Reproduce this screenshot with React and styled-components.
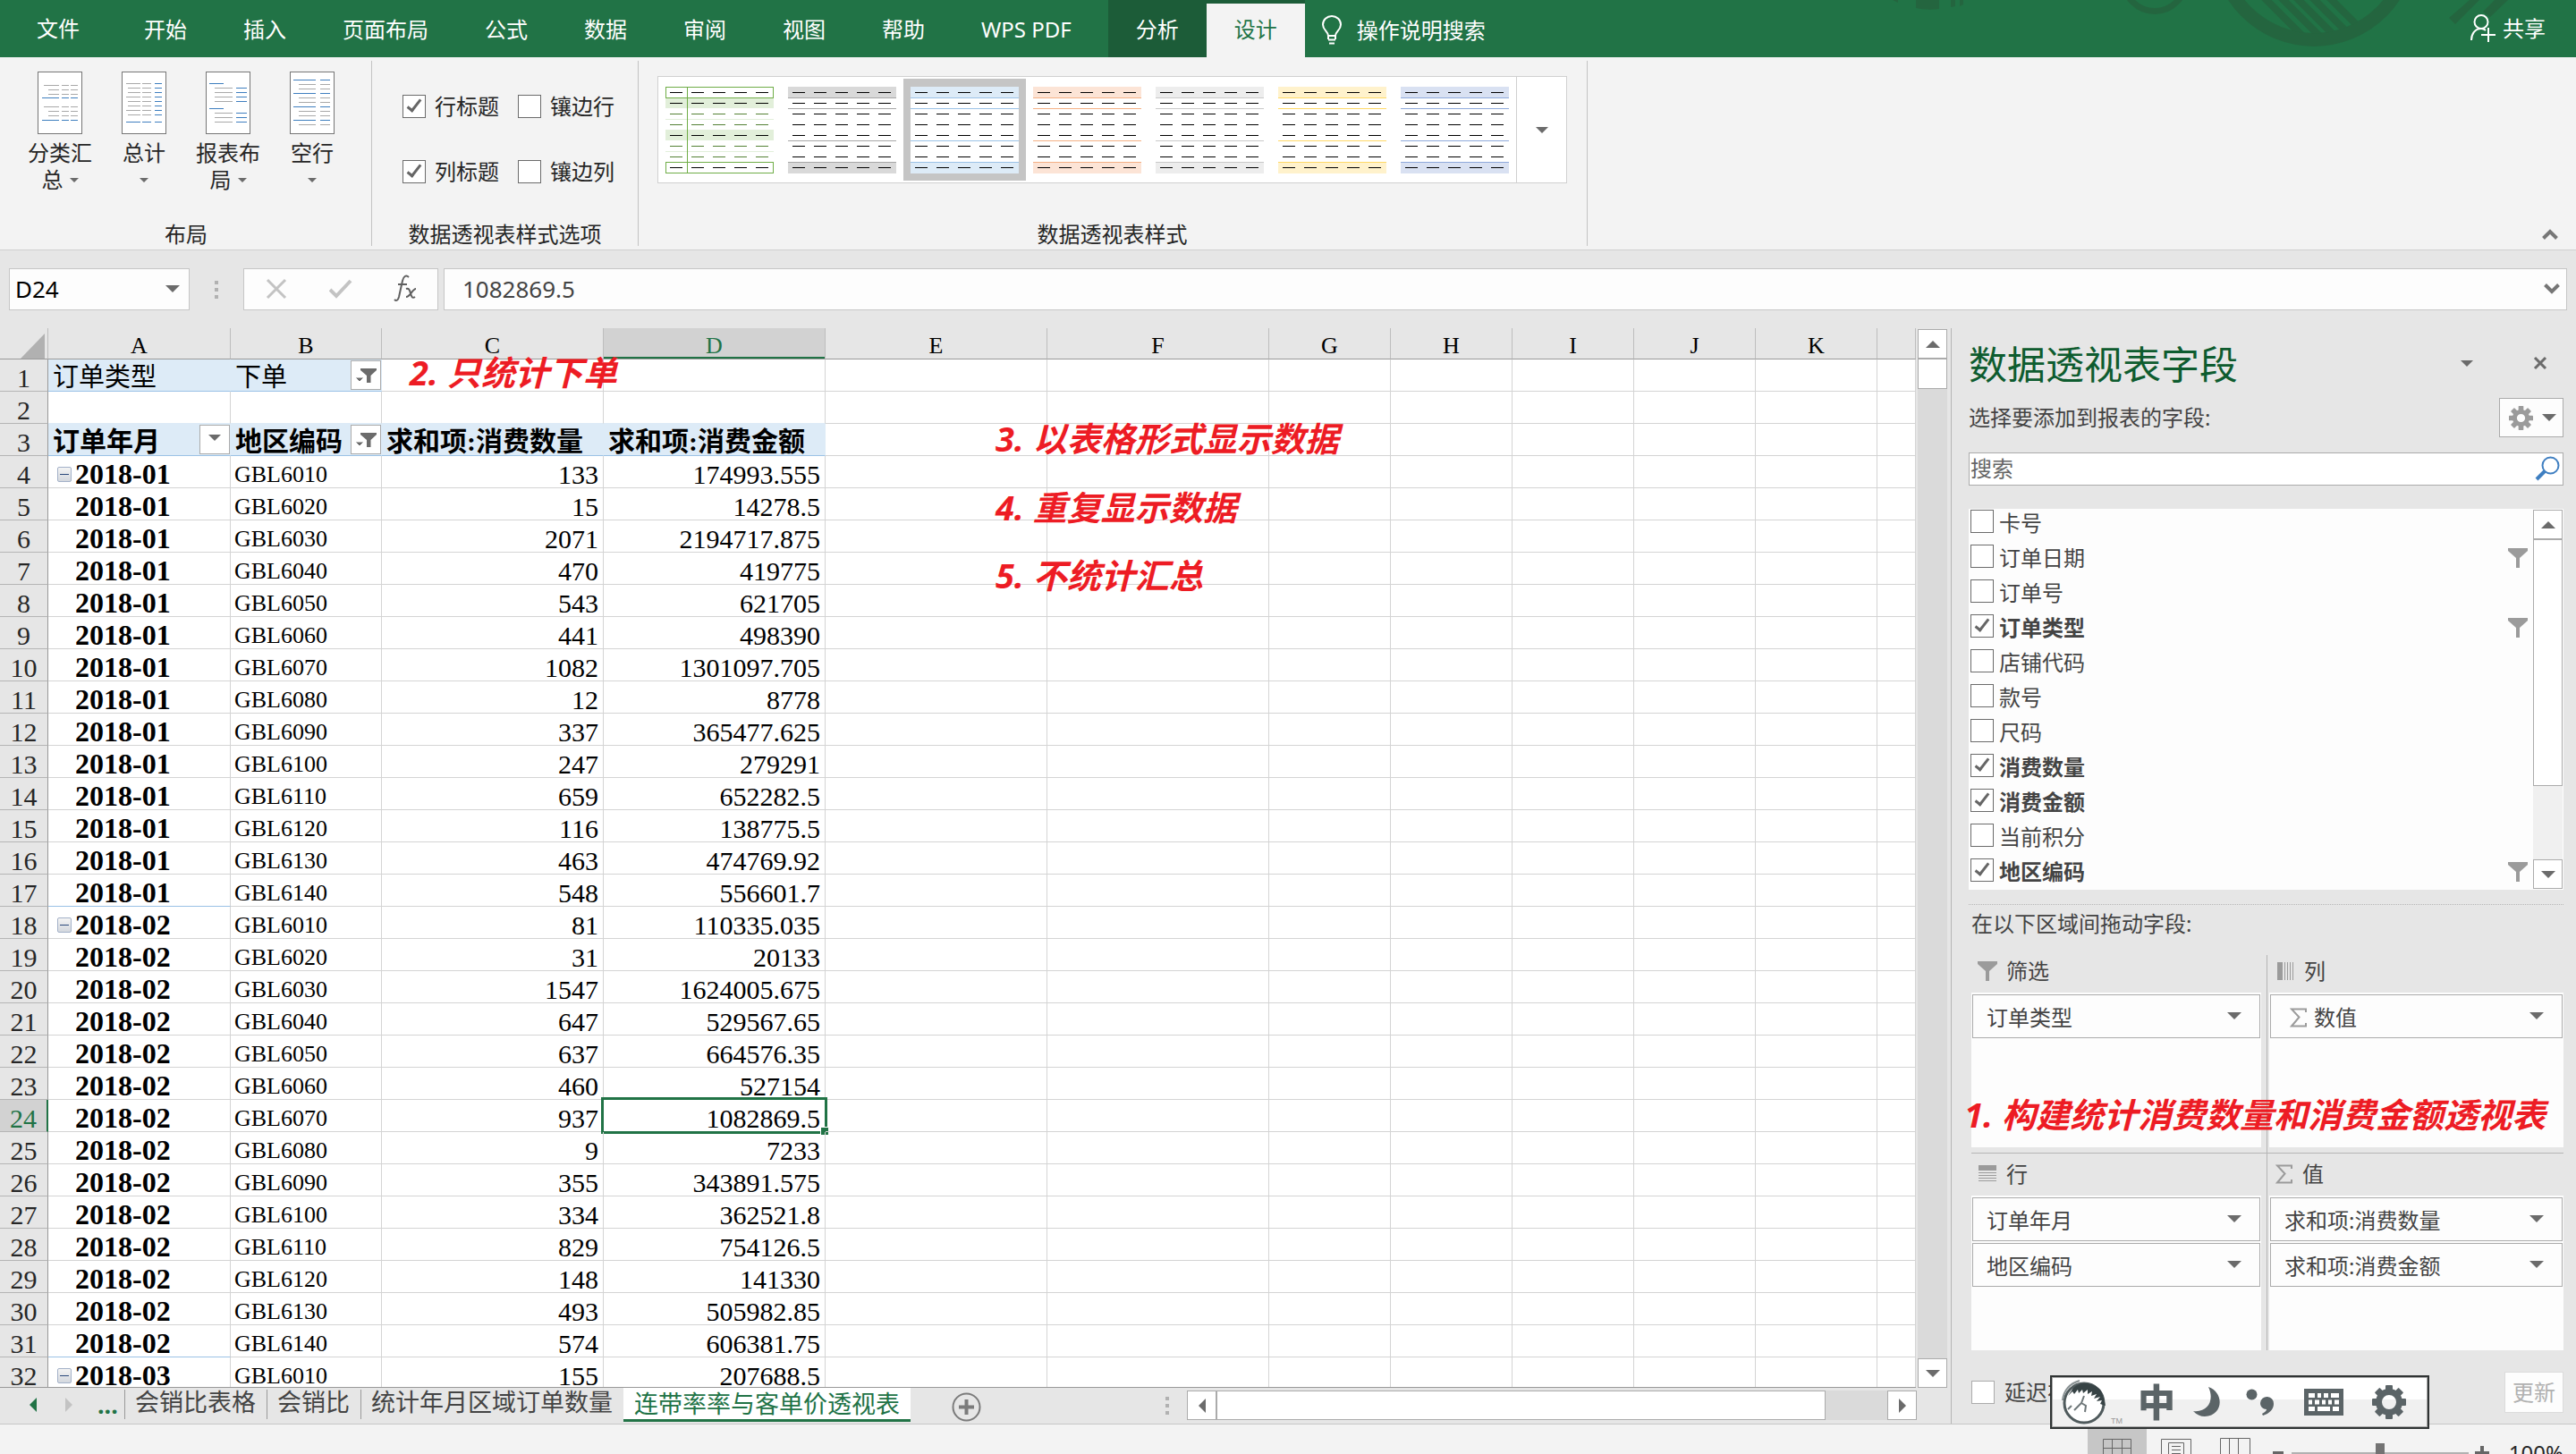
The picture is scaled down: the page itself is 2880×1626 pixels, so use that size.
import React from "react";
import styled, { createGlobalStyle, css } from "styled-components";

const UI = '"Noto Sans", "Noto Sans CJK SC", sans-serif';
const SERIF = '"Liberation Serif", "Noto Sans CJK SC", serif';
const GREEN = "#217346";
const LINE = "#ababab";
const GRID = "#d4d4d4";
const PIVOT = "#ddebf7";
const PIVOT_LINE = "#9bc2e6";

const GlobalStyle = createGlobalStyle`
  *, *::before, *::after { box-sizing: border-box; }
  html, body, #root { height: 100%; }
  body { margin: 0; overflow: hidden; background: #e6e6e6; font: 24px/32px ${UI}; color: #262626; }
  button, input { font: inherit; color: inherit; margin: 0; padding: 0; border: 0; border-radius: 0; background: none; }
  button { white-space: nowrap; }
  svg { display: block; flex: none; }
`;

const Page = styled.div`
  display: flex;
  flex-direction: column;
  height: 100vh;
`;

/* ---------- ribbon tabs ---------- */

const TabBar = styled.header`
  position: relative;
  display: flex;
  flex: none;
  height: 64px;
  background: ${GREEN};
  color: #fff;
`;

const Decoration = styled.svg`
  position: absolute;
  top: 0;
  right: 40px;
`;

const Tab = styled.button`
  height: 64px;
  padding: 1px 32px 0 31px;
`;

const FileTab = styled(Tab)`
  padding: 2px 41px;
`;

const ContextTabs = styled.div`
  display: flex;
  margin-left: 9px;
  padding-top: 4px;
  background: #1c5c38;
`;

const ContextTab = styled(Tab)`
  height: 60px;
  padding: 0 31px 3px;
  background: ${(p) => (p.$active ? "#f3f3f3" : "transparent")};
  color: ${(p) => (p.$active ? GREEN : "#fff")};
`;

const TellMe = styled.button`
  display: flex;
  align-items: center;
  gap: 16px;
  padding: 4px 0 0 18px;
`;

const Share = styled.button`
  position: relative;
  display: flex;
  align-items: center;
  gap: 8px;
  margin-left: auto;
  padding-right: 34px;
`;

/* ---------- ribbon ---------- */

const Ribbon = styled.section`
  display: flex;
  flex: none;
  height: 216px;
  padding: 4px 0;
  background: #f3f3f3;
  border-bottom: 1px solid #d0d0d0;
`;

const Group = styled.div`
  display: flex;
  flex-direction: column;
  justify-content: space-between;
  align-items: center;
  padding: ${(p) => p.$pad};
  border-right: 1px solid #c3c3c3;
`;

const GroupTitle = styled.div`
  line-height: 26px;
`;

const LayoutButtons = styled.div`
  display: flex;
`;

const LayoutButton = styled.button`
  display: flex;
  flex-direction: column;
  align-items: center;
  width: 94px;
  line-height: 30px;
`;

const LayoutLabel = styled.span`
  margin-top: 6px;
`;

const LabelLine = styled.span`
  display: flex;
  align-items: center;
  justify-content: center;
  gap: 7px;
  height: 30px;
`;

const Caret = styled.span`
  display: block;
  flex: none;
  width: 0;
  height: 0;
  border: ${(p) => p.$size || 5}px solid transparent;
  border-bottom-width: 0;
  border-top-color: #6b6b6b;
`;

const OptionGrid = styled.div`
  display: grid;
  grid-template-columns: 129px auto;
  row-gap: 41px;
  padding: 35px 26px 0 34px;
`;

const CheckLabel = styled.label`
  display: flex;
  align-items: center;
  gap: 10px;
  line-height: 32px;
`;

const Check = styled.input.attrs({ type: "checkbox" })`
  appearance: none;
  flex: none;
  width: 26px;
  height: 26px;
  display: grid;
  place-items: center;
  background: #fff;
  border: 1px solid ${(p) => (p.$light ? "#ababab" : "#6b6b6b")};

  &:checked::after {
    content: "";
    width: 8px;
    height: 17px;
    margin-bottom: 5px;
    border: solid #666;
    border-width: 0 3px 3px 0;
    transform: rotate(38deg);
  }
`;

const Gallery = styled.div`
  display: flex;
  margin-top: 17px;
  height: 120px;
  background: #fff;
  border: 1px solid #d0d0d0;
`;

const StyleButton = styled.button`
  display: grid;
  place-items: center;
  width: 137px;
  height: 114px;
  margin-top: 2px;
  background: ${(p) => (p.$selected ? "#c5c5c5" : "transparent")};
`;

const GalleryMore = styled.button`
  display: grid;
  place-items: center;
  width: 56px;
  border-left: 1px solid #d0d0d0;
`;

const Collapse = styled.button`
  align-self: flex-end;
  margin: 0 20px 7px auto;
`;

/* ---------- formula bar ---------- */

const FormulaBar = styled.section`
  display: flex;
  flex: none;
  height: 87px;
  padding: 20px 10px;
`;

const Box = styled.div`
  display: flex;
  align-items: center;
  padding-bottom: 2px;
  background: #fdfdfd;
  border: 1px solid #c6c6c6;
`;

const NameBox = styled(Box)`
  width: 202px;
  padding: 0 10px 2px 6px;
  font-size: 26px;
  color: #000;

  input { flex: 1; min-width: 0; }
`;

const FormulaTools = styled(Box)`
  width: 218px;
  justify-content: space-between;
  padding: 0 23px 2px 24px;
`;

const FormulaInput = styled(Box)`
  flex: 1;
  margin-left: 6px;
  padding: 0 7px 2px 20px;
  font-size: 26px;
  color: #444;

  input { flex: 1; min-width: 0; }
`;

const Dots = styled.span`
  flex: none;
  width: 4px;
  height: 20px;
  align-self: center;
  margin: ${(p) => p.$margin};
  background: repeating-linear-gradient(#b1b1b1 0 4px, transparent 4px 8px);
`;

/* ---------- workspace ---------- */

const Workspace = styled.main`
  position: relative;
  display: flex;
  flex: 1;
  min-height: 0;
`;

const Book = styled.div`
  display: flex;
  flex-direction: column;
  flex: 1;
  min-width: 0;
`;

const SheetRow = styled.div`
  display: flex;
  flex: 1;
  min-height: 0;
`;

const SheetView = styled.div`
  position: relative;
  flex: 1;
  min-width: 0;
  overflow: hidden;
  background: #fff;
  border-bottom: 1px solid #999;
`;

const Table = styled.table`
  width: 100%;
  table-layout: fixed;
  border-collapse: separate;
  border-spacing: 0;
  font: 30px/29px ${SERIF};
  color: #000;
`;

const ColHead = styled.th`
  height: 35px;
  padding: 6px 0 0;
  font-size: 26px;
  font-weight: 400;
  line-height: 28px;
  background: ${(p) => (p.$selected ? "#d2d2d2" : "#e6e6e6")};
  color: ${(p) => (p.$selected ? GREEN : "#000")};
  border-right: 1px solid #bdbdbd;
  border-bottom: 1px solid #999;
  box-shadow: ${(p) => (p.$selected ? `inset 0 -2px ${GREEN}` : "none")};
`;

const RowHead = styled.th`
  height: 36px;
  padding: 6px 0 0;
  font-weight: 400;
  background: ${(p) => (p.$selected ? "#d2d2d2" : "#e6e6e6")};
  color: ${(p) => (p.$selected ? GREEN : "#262626")};
  border-right: ${(p) => (p.$selected ? `2px solid ${GREEN}` : "1px solid #999")};
  border-bottom: 1px solid #b5b5b5;
`;

const Cell = styled.td`
  position: relative;
  height: 36px;
  padding: ${(p) => (p.$tools ? "0 0 0 5px" : "6px 5px 0 4px")};
  text-align: ${(p) => (p.$num ? "right" : "left")};
  white-space: nowrap;
  font-size: ${(p) => (p.$code ? 26 : 30)}px;
  border-right: 1px solid ${(p) => (p.$fill ? PIVOT : GRID)};
  border-bottom: 1px solid ${(p) => p.$bottom || GRID};
  background: ${(p) => (p.$fill ? PIVOT : "transparent")};
  font-weight: ${(p) => (p.$bold ? 700 : 400)};
`;

const SelectionFrame = styled.span`
  position: absolute;
  inset: -3px;
  border: 3px solid ${GREEN};

  &::after {
    content: "";
    position: absolute;
    right: -4px;
    bottom: -4px;
    width: 8px;
    height: 8px;
    background: ${GREEN};
    outline: 1px solid #fff;
  }
`;

const HeadCell = styled.div`
  display: flex;
  align-items: center;
  justify-content: space-between;
  height: 35px;
  font-size: ${(p) => (p.$bold ? 30 : 29)}px;
  line-height: 30px;

  span:first-child { padding-top: 5px; }
`;

const FilterButton = styled.button`
  display: grid;
  place-items: center;
  width: 34px;
  height: 33px;
  background: #fff;
  border: 1px solid ${LINE};
`;

const DateCell = styled.div`
  display: flex;
  align-items: center;
  gap: 4px;
  padding-left: ${(p) => (p.$toggle ? 6 : 26)}px;
  font-size: 32px;
`;

const Toggle = styled.button`
  width: 16px;
  height: 17px;
  display: grid;
  place-items: center;
  border: 1px solid #a3b1c8;
  border-radius: 2px;
  background: linear-gradient(#f4f4f4, #d4d8de);

  &::after { content: ""; width: 10px; height: 1px; background: #2c4a7c; }
`;

/* ---------- scroll bars ---------- */

const Scroll = styled.div`
  display: flex;
  flex: none;
  flex-direction: ${(p) => (p.$row ? "row" : "column")};
  ${(p) => (p.$row ? "width: 816px; height: 33px;" : "width: 33px;")}
  margin: ${(p) => p.$margin || 0};
  background: ${(p) => p.$track || "#dadada"};
`;

const ScrollButton = styled.button`
  display: grid;
  place-items: center;
  flex: none;
  width: 33px;
  height: 33px;
  background: #fff;
  border: 1px solid ${LINE};
`;

const Thumb = styled.div`
  flex: none;
  ${(p) => (p.$row ? `width: ${p.$length};` : `height: ${p.$length};`)}
  background: #fff;
  border: 1px solid ${LINE};
`;

const Space = styled.div`
  flex: 1;
`;

const Arrow = styled.svg.attrs({ width: 16, height: 16, viewBox: "0 0 16 16" })`
  fill: ${(p) => p.$color || "#6b6b6b"};
  transform: rotate(${(p) => p.$turn || 0}deg);
`;

/* ---------- sheet tabs ---------- */

const SheetTabs = styled.nav`
  display: flex;
  flex: none;
  height: 40px;
  font-size: 27px;
  color: #444;
`;

const NavButtons = styled.div`
  display: flex;
  align-items: center;
  gap: 24px;
  width: 139px;
  padding: 0 0 3px 29px;

  b { color: ${GREEN}; line-height: 28px; }
`;

const SheetTab = styled.button`
  height: 38px;
  padding: 0 12px;
  line-height: 34px;
  ${(p) =>
    p.$active
      ? css`
          background: #fff;
          color: ${GREEN};
          border-bottom: 3px solid ${GREEN};
        `
      : css`
          height: 33px;
          margin-top: 2px;
          line-height: 28px;
          border-left: 1px solid #999;
          padding: 0 12px 5px 11px;
        `}
`;

const AddSheet = styled.button`
  align-self: flex-start;
  margin: 5px 0 0 46px;
`;

/* ---------- field pane ---------- */

const Pane = styled.aside`
  display: flex;
  flex-direction: column;
  flex: none;
  width: 699px;
  padding: 16px 14px 0 19px;
  border-left: 1px solid #b5b5b5;
  color: #444;
`;

const PaneHead = styled.div`
  display: flex;
  align-items: center;
  height: 50px;

  h2 { flex: 1; margin: 0; font-size: 43px; font-weight: 400; line-height: 50px; color: #0e5c2f; }
`;

const PaneTools = styled.div`
  display: flex;
  align-items: center;
  gap: 67px;
  padding: 0 18px 4px 0;
`;

const Between = styled.div`
  display: flex;
  align-items: center;
  justify-content: space-between;
  margin-top: ${(p) => p.$top}px;
`;

const GearButton = styled.button`
  display: flex;
  align-items: center;
  justify-content: space-between;
  width: 72px;
  height: 44px;
  padding: 0 7px 0 10px;
  background: #fdfdfd;
  border: 1px solid ${LINE};
`;

const Search = styled.label`
  display: flex;
  align-items: center;
  justify-content: space-between;
  height: 37px;
  margin-top: 17px;
  padding: 0 3px 2px 1px;
  background: #fff;
  border: 1px solid ${LINE};

  input { flex: 1; }
  input::placeholder { color: #666; opacity: 1; }
`;

const FieldBox = styled.div`
  display: flex;
  height: 426px;
  margin-top: 26px;
  padding: 1px 1px 1px 2px;
  background: #fdfdfd;
`;

const FieldList = styled.div`
  flex: 1;
  overflow: hidden;
`;

const Field = styled.div`
  display: flex;
  align-items: flex-start;
  height: 39px;
  padding-right: 6px;

  label { display: flex; flex: 1; gap: 6px; line-height: 30px; font-weight: ${(p) => (p.$bold ? 700 : 400)}; }
  svg { margin-top: 4px; }
`;

const DragHint = styled.div`
  margin-top: 16px;
  padding-left: 3px;
  line-height: 42px;
  border-top: 1px dotted #b5b5b5;
`;

const Areas = styled.div`
  display: grid;
  grid-template-columns: 1fr 1fr;
  margin: 14px 0 0 3px;
`;

const Area = styled.section`
  padding: ${(p) => (p.$left ? "0 6px" : "0 0")} ${(p) => (p.$top ? "6px" : "0")} ${(p) => (p.$left ? "0" : "2px")};
  border-right: ${(p) => (p.$left ? "1px solid #b5b5b5" : "0")};
  border-top: ${(p) => (p.$top ? "0" : "1px solid #b5b5b5")};
`;

const AreaTitle = styled.h3`
  display: flex;
  align-items: center;
  gap: 10px;
  height: ${(p) => (p.$top ? 42 : 47)}px;
  margin: 0;
  padding: 0 0 ${(p) => (p.$top ? 6 : 2)}px 7px;
  font-size: 24px;
  font-weight: 400;
`;

const DropBox = styled.div`
  display: flex;
  flex-direction: column;
  gap: 2px;
  height: 173px;
  padding: 2px 1px;
  background: #fdfdfd;
`;

const Chip = styled.button`
  display: flex;
  align-items: center;
  justify-content: space-between;
  height: 49px;
  padding: 2px 20px 0 15px;
  border: 1px solid ${LINE};

  span:first-child { display: flex; align-items: center; gap: 7px; }
  svg { margin-left: 6px; }
  ${Caret} { margin-bottom: 3px; }
`;

const Defer = styled.label`
  display: flex;
  align-items: center;
  gap: 11px;
  padding-left: 3px;
`;

const Update = styled.button`
  width: 66px;
  height: 46px;
  background: #fdfdfd;
  border: 1px solid #dcdcdc;
  color: #b1b1b1;
`;

/* ---------- status bar ---------- */

const Status = styled.footer`
  flex: none;
  height: 34px;
  overflow: hidden;
  background: #f3f3f3;
  border-top: 1px solid #c6c6c6;
`;

const StatusInner = styled.div`
  display: flex;
  align-items: center;
  justify-content: flex-end;
  height: 63px;
  padding-right: 14px;
`;

const ViewButton = styled.button`
  display: grid;
  place-items: center;
  width: 66px;
  height: 63px;
  background: ${(p) => (p.$active ? "#c6c6c6" : "transparent")};
`;

const ZoomOut = styled.button`
  width: 12px;
  height: 4px;
  margin-left: 9px;
  background: #666;
`;

const ZoomSlider = styled.input.attrs({ type: "range" })`
  appearance: none;
  width: 198px;
  height: 22px;
  margin: 0 7px 0 9px;
  background: linear-gradient(#b1b1b1, #b1b1b1) center / 100% 2px no-repeat;

  &::-webkit-slider-thumb {
    appearance: none;
    width: 10px;
    height: 22px;
    background: #737373;
  }
`;

const Zoom = styled.button`
  margin-left: 22px;
`;

/* ---------- floating parts ---------- */

const Note = styled.p`
  position: absolute;
  left: ${(p) => p.$x}px;
  top: ${(p) => p.$y}px;
  margin: 0;
  font: italic 700 38px/44px ${UI};
  color: #ed1c24;
  white-space: nowrap;
`;

const PaneNote = styled(Note)`
  right: 34px;
  left: auto;
  top: 857px;
`;

const Ime = styled.div`
  position: fixed;
  z-index: 2;
  right: 164px;
  bottom: 28px;
  display: grid;
  grid-template-columns: 86px 62px 59px 65px 76px 38px;
  align-items: center;
  width: 424px;
  height: 60px;
  padding-left: 10px;
  border: 2px solid #2f3333;
  background: linear-gradient(#fff 45%, #f0f0f0 45%);
  box-shadow: inset 0 0 0 1px #a8a8a8;
  color: #5b6467;
`;

const ImeMode = styled.button`
  justify-self: start;
  font-weight: 900;
  font-size: 42px;
  line-height: 44px;
`;

/* ---------- drawings ---------- */

const Lines = ({ items, color }) =>
  items.map(([x1, x2, y], i) => <path key={i} d={`M${x1} ${y + 0.5}H${x2}`} stroke={color} />);

const cols = (ys, spans) => ys.flatMap((y) => spans.map(([a, b]) => [a, b, y]));

const LAYOUT_ICONS = {
  subtotal: {
    gray: [
      ...cols([15, 39], [[7, 24], [27, 35], [37, 45]]),
      ...cols([20, 25, 44, 49], [[12, 24], [27, 35], [37, 45]]),
    ],
    blue: cols([29, 54], [[5, 24], [27, 35], [37, 45]]),
  },
  total: {
    gray: [
      ...cols([13, 28, 43], [[5, 21], [23, 33]]),
      ...cols([18, 23, 33, 38, 48], [[7, 21], [23, 33]]),
    ],
    blue: [...cols([13, 18, 23, 28, 33, 38, 43, 48], [[37, 45]]), ...cols([56], [[5, 21], [23, 33], [37, 45]])],
  },
  report: {
    gray: cols([18, 23, 28, 33, 46, 51, 56], [[10, 30]]),
    blue: [...cols([13, 41], [[4, 20]]), ...cols([18, 23, 28, 33, 46, 51, 56], [[34, 46]])],
  },
  blank: {
    gray: cols([14, 19, 29, 34, 44, 49, 59], [[10, 29], [34, 45]]),
    blue: cols([9, 24, 39, 54], [[4, 29], [34, 45]]),
  },
};

const LayoutIcon = ({ kind }) => (
  <svg width="50" height="70" viewBox="0 0 50 70">
    <rect x=".5" y=".5" width="49" height="69" fill="#fff" stroke="#767676" />
    <Lines items={LAYOUT_ICONS[kind].gray} color="#a9a9a9" />
    <Lines items={LAYOUT_ICONS[kind].blue} color="#3f7fbf" />
  </svg>
);

const DASHES = [0, 1, 2, 3, 4, 5, 6, 7];

const Swatch = ({ fill, line, green }) => (
  <svg width="121" height="97" viewBox="0 0 121 97" shapeRendering="crispEdges">
    <rect width="121" height="97" fill="#fff" />
    {green ? (
      <>
        <path d="M0 13h121v11H0zM0 48h121v12H0z" fill="#e2efda" />
        <path d="M0 36.5h121M0 72.5h121" stroke="#e2efda" />
        <path d="M.5.5h120v12H.5zM.5 84.5h120v12H.5zM24.5 0v97" fill="none" stroke="#70ad47" />
      </>
    ) : (
      <>
        <path d="M0 0h121v12H0zM0 85h121v12H0z" fill={fill} />
        <path d="M0 12.5h121M0 24.5h121M0 60.5h121M0 84.5h121" stroke={line} />
      </>
    )}
    {DASHES.map((i) => (
      <path
        key={i}
        d={`M5 ${6.5 + i * 12}h110`}
        stroke={green && [2, 3, 5, 6].includes(i) ? "#548235" : "#000"}
        strokeDasharray="14 10"
      />
    ))}
  </svg>
);

const Funnel = ({ size = 22, color = "#9b9b9b" }) => (
  <svg width={size} height={size} viewBox="0 0 22 22">
    <path d="M0 0h22v3l-9 8v11H9V11L0 3z" fill={color} />
  </svg>
);

const FilterGlyph = () => (
  <svg width="26" height="20" viewBox="0 0 26 20">
    <path d="M7 2h18v2l-6.500 6v8h-4.500v-8L7 4z" fill="#6b6b6b" />
    <path d="M1 12h10l-5 5z" fill="#6b6b6b" stroke="#fff" />
  </svg>
);

const gearTeeth = (n, cx, cy, r1, r2, w) =>
  Array.from({ length: n }, (_, i) => (
    <rect
      key={i}
      x={cx - w / 2}
      y={cy - r2}
      width={w}
      height={r2 - r1 + 3}
      rx="1"
      transform={`rotate(${(360 / n) * i} ${cx} ${cy})`}
    />
  ));

const Gear = ({ size, color, ring }) => (
  <svg width={size} height={size} viewBox="0 0 38 38" fill={color}>
    {gearTeeth(8, 19, 19, 12, 19, 8)}
    <circle cx="19" cy="19" r={ring} fill="none" stroke={color} strokeWidth="7" />
  </svg>
);

const Sigma = () => (
  <svg width="20" height="22" viewBox="0 0 20 22">
    <path d="M18 5V1.500H2L10.500 10.500 2 20.500h16V17" fill="none" stroke="#9b9b9b" strokeWidth="2" />
  </svg>
);

const ColumnsIcon = () => (
  <svg width="22" height="20" viewBox="0 0 22 20">
    <path d="M2 0h6v20H2z" fill="#9b9b9b" />
    <path d="M10.500 0v20M13.500 0v20M16.500 0v20M19.500 0v20" stroke="#9b9b9b" />
  </svg>
);

const RowsIcon = () => (
  <svg width="22" height="20" viewBox="0 0 22 20">
    <path d="M1 0h20v6H1z" fill="#9b9b9b" />
    <path d="M1 8.500h20M1 11.500h20M1 14.500h20M1 17.500h20" stroke="#9b9b9b" />
  </svg>
);

const Chevron = ({ up }) => (
  <svg width="18" height="12" viewBox="0 0 18 12" fill="none" stroke="#767676" strokeWidth="4">
    <path d={up ? "M1.500 10.500 9 3l7.500 7.500" : "M1.500 1.500 9 9l7.500-7.500"} />
  </svg>
);

const TopDecoration = () => (
  <Decoration width="780" height="64" viewBox="2060 0 780 64" aria-hidden="true">
    <g fill="none" stroke="#24653f">
      <circle cx="2587" cy="-62.600" r="107" strokeWidth="15" />
      <circle cx="2409" cy="-22" r="34.500" strokeWidth="7" />
      <clipPath id="ring">
        <circle cx="2587" cy="-62.600" r="100" />
      </clipPath>
      <path
        clipPath="url(#ring)"
        strokeWidth="8"
        d="M2524-10 2584 50M2543-10 2603 50M2560-10 2620 50M2578-10 2638 50M2597-10 2657 50"
      />
    </g>
    <path
      fill="#24653f"
      d="M2142 0h26v10q-13 2-26-1zM2181 0h5v7l-5 1zM2191 0h4v5l-4 2zM2116 0h6v3zM2761 0l-23 20 7 7 27-27zM2789 0l-13 13 8 6 20-19z"
    />
  </Decoration>
);

const EnterMark = () => (
  <svg width="26" height="22" viewBox="0 0 26 22" fill="none" stroke="#c3c3c3" strokeWidth="4">
    <path d="M1 12l7 7L24 2" />
  </svg>
);

/* ---------- data ---------- */

const TABS = ["开始", "插入", "页面布局", "公式", "数据", "审阅", "视图", "帮助", "WPS PDF"];

const LAYOUTS = [
  ["subtotal", "分类汇", "总"],
  ["total", "总计", ""],
  ["report", "报表布", "局"],
  ["blank", "空行", ""],
];

const OPTIONS = [
  ["行标题", true],
  ["镶边行", false],
  ["列标题", true],
  ["镶边列", false],
];

const STYLES = [
  { green: true },
  { fill: "#d9d9d9", line: "#a6a6a6" },
  { fill: "#ddebf7", line: "#9bc2e6", selected: true },
  { fill: "#fce4d6", line: "#f4b084" },
  { fill: "#ededed", line: "#c9c9c9" },
  { fill: "#fff2cc", line: "#ffd966" },
  { fill: "#d9e1f2", line: "#8ea9db" },
];

const COLUMNS = [
  ["A", 204], ["B", 169], ["C", 248], ["D", 248], ["E", 248], ["F", 248],
  ["G", 136], ["H", 136], ["I", 136], ["J", 136], ["K", 136], ["", null],
];

const MONTHS = [
  ["2018-01", [
    ["GBL6010", "133", "174993.555"], ["GBL6020", "15", "14278.5"], ["GBL6030", "2071", "2194717.875"],
    ["GBL6040", "470", "419775"], ["GBL6050", "543", "621705"], ["GBL6060", "441", "498390"],
    ["GBL6070", "1082", "1301097.705"], ["GBL6080", "12", "8778"], ["GBL6090", "337", "365477.625"],
    ["GBL6100", "247", "279291"], ["GBL6110", "659", "652282.5"], ["GBL6120", "116", "138775.5"],
    ["GBL6130", "463", "474769.92"], ["GBL6140", "548", "556601.7"],
  ]],
  ["2018-02", [
    ["GBL6010", "81", "110335.035"], ["GBL6020", "31", "20133"], ["GBL6030", "1547", "1624005.675"],
    ["GBL6040", "647", "529567.65"], ["GBL6050", "637", "664576.35"], ["GBL6060", "460", "527154"],
    ["GBL6070", "937", "1082869.5"], ["GBL6080", "9", "7233"], ["GBL6090", "355", "343891.575"],
    ["GBL6100", "334", "362521.8"], ["GBL6110", "829", "754126.5"], ["GBL6120", "148", "141330"],
    ["GBL6130", "493", "505982.85"], ["GBL6140", "574", "606381.75"],
  ]],
  ["2018-03", [["GBL6010", "155", "207688.5"]]],
];

const ROWS = MONTHS.flatMap(([month, rows]) =>
  rows.map((r, i) => ({ month, first: i === 0, last: i === rows.length - 1 && rows.length > 1, values: r }))
);

const FIELDS = [
  ["卡号"], ["订单日期", false, true], ["订单号"], ["订单类型", true, true], ["店铺代码"], ["款号"],
  ["尺码"], ["消费数量", true], ["消费金额", true], ["当前积分"], ["地区编码", true, true],
];

const AREAS = [
  { title: "筛选", icon: <Funnel />, top: true, left: true, items: ["订单类型"] },
  { title: "列", icon: <ColumnsIcon />, top: true, items: ["数值"], sigma: true },
  { title: "行", icon: <RowsIcon />, left: true, items: ["订单年月", "地区编码"] },
  { title: "值", icon: <Sigma />, items: ["求和项:消费数量", "求和项:消费金额"] },
];

/* ---------- composed parts ---------- */

const blanks = (n) => Array.from({ length: n }, (_, i) => <Cell key={`b${i}`} />);

const UpArrow = () => (
  <Arrow><path d="M8 4l8 8H0z" /></Arrow>
);

const SideArrow = ({ right, color }) => (
  <Arrow $turn={right ? 90 : -90} $color={color}><path d="M8 4l8 8H0z" /></Arrow>
);

const DownArrow = () => (
  <Arrow $turn={180}><path d="M8 4l8 8H0z" /></Arrow>
);

const PivotHead = ({ bold, children, tool }) => (
  <Cell $tools $fill $bold={bold} $bottom={PIVOT_LINE}>
    <HeadCell $bold={bold}>
      <span>{children}</span>
      {tool && <FilterButton aria-label="筛选">{tool}</FilterButton>}
    </HeadCell>
  </Cell>
);

function Sheet() {
  return (
    <Table>
      <colgroup>
        <col style={{ width: 54 }} />
        {COLUMNS.map(([name, width]) => (
          <col key={name} style={width ? { width } : undefined} />
        ))}
      </colgroup>
      <thead>
        <tr>
          <ColHead>
            <svg width="50" height="28" viewBox="0 0 50 28">
              <path d="M50 0v28H23z" fill="#b1b1b1" />
            </svg>
          </ColHead>
          {COLUMNS.map(([name]) => (
            <ColHead key={name} $selected={name === "D"}>{name}</ColHead>
          ))}
        </tr>
      </thead>
      <tbody>
        <tr>
          <RowHead>1</RowHead>
          <PivotHead>订单类型</PivotHead>
          <PivotHead tool={<FilterGlyph />}>下单</PivotHead>
          {blanks(10)}
        </tr>
        <tr>
          <RowHead>2</RowHead>
          {[0, 1, 2, 3].map((i) => <Cell key={i} $bottom={PIVOT} />)}
          {blanks(8)}
        </tr>
        <tr>
          <RowHead>3</RowHead>
          <PivotHead bold tool={<Caret $size={7} />}>订单年月</PivotHead>
          <PivotHead bold tool={<FilterGlyph />}>地区编码</PivotHead>
          <PivotHead bold>求和项:消费数量</PivotHead>
          <PivotHead bold>求和项:消费金额</PivotHead>
          {blanks(8)}
        </tr>
        {ROWS.map(({ month, first, last, values }, i) => {
          const n = i + 4;
          return (
            <tr key={n}>
              <RowHead $selected={n === 24}>{n}</RowHead>
              <Cell $bold $bottom={last ? PIVOT_LINE : undefined}>
                <DateCell $toggle={first}>
                  {first && <Toggle aria-label="折叠" />}
                  {month}
                </DateCell>
              </Cell>
              <Cell $code>{values[0]}</Cell>
              <Cell $num>{values[1]}</Cell>
              <Cell $num>
                {values[2]}
                {n === 24 && <SelectionFrame />}
              </Cell>
              {blanks(8)}
            </tr>
          );
        })}
      </tbody>
    </Table>
  );
}

function FieldPane() {
  return (
    <Pane>
      <PaneHead>
        <h2>数据透视表字段</h2>
        <PaneTools>
          <button aria-label="选项"><Caret $size={7} /></button>
          <button aria-label="关闭">
            <svg width="16" height="16" viewBox="0 0 16 16" stroke="#6b6b6b" strokeWidth="3">
              <path d="M2 2l12 12M14 2 2 14" />
            </svg>
          </button>
        </PaneTools>
      </PaneHead>
      <Between $top={12}>
        <span>选择要添加到报表的字段:</span>
        <GearButton aria-label="工具"><Gear size={27} color="#9b9b9b" ring={10} /><Caret $size={8} /></GearButton>
      </Between>
      <Search>
        <input type="text" placeholder="搜索" aria-label="搜索" />
        <svg width="28" height="28" viewBox="0 0 28 28" fill="none" stroke="#3f7fc1">
          <circle cx="17.500" cy="10.500" r="9" strokeWidth="2" />
          <path d="M11 17 2 26" strokeWidth="4" />
        </svg>
      </Search>
      <FieldBox>
        <FieldList>
          {FIELDS.map(([name, checked, filtered]) => (
            <Field key={name} $bold={checked}>
              <label><Check defaultChecked={!!checked} />{name}</label>
              {filtered && <Funnel />}
            </Field>
          ))}
        </FieldList>
        <Scroll $track="#f0f0f0">
          <ScrollButton aria-label="向上"><UpArrow /></ScrollButton>
          <Thumb $length="65%" />
          <Space />
          <ScrollButton aria-label="向下"><DownArrow /></ScrollButton>
        </Scroll>
      </FieldBox>
      <DragHint>在以下区域间拖动字段:</DragHint>
      <Areas>
        {AREAS.map(({ title, icon, top, left, items, sigma }) => (
          <Area key={title} $top={top} $left={left}>
            <AreaTitle $top={top}>{icon}{title}</AreaTitle>
            <DropBox>
              {items.map((item) => (
                <Chip key={item}>
                  <span>{sigma && <Sigma />}{item}</span>
                  <Caret $size={8} />
                </Chip>
              ))}
            </DropBox>
          </Area>
        ))}
      </Areas>
      <Between $top={24}>
        <Defer><Check $light />延迟布局更新</Defer>
        <Update disabled>更新</Update>
      </Between>
    </Pane>
  );
}

function ImeBar() {
  return (
    <Ime>
      <svg width="70" height="52" viewBox="0 0 70 52">
        <circle cx="26" cy="27" r="22" fill="#fff" stroke="#4f5a5c" strokeWidth="3" />
        <path d="M14 10Q22 3 34 6t14 16l2 8-6-2 2-4-6 1 4-5-7 2 3-5-6 2 1-5-5 3v-5l-5 4-1-4-4 4-1-4-4 5-2-3-5 5z" fill="#374345" />
        <path d="M2 24Q4 7 21 2" fill="none" stroke="#8a9294" strokeWidth="2" />
        <path d="M15 35l8-8 3-8M23 27l5 3-1 7M8 34l4-4" fill="none" stroke="#6e7779" strokeWidth="2" />
        <text x="56" y="50" fontSize="9" fill="#9a9a9a" fontFamily="Liberation Sans, sans-serif">TM</text>
      </svg>
      <ImeMode>中</ImeMode>
      <svg width="30" height="34" viewBox="0 0 30 34">
        <path d="M17 0c18 6 17 32-4 33-5 0-9-2-13-6 17 2 24-13 17-27z" fill="currentColor" />
      </svg>
      <svg width="32" height="30" viewBox="0 0 32 30" fill="currentColor">
        <circle cx="6.500" cy="6.500" r="6" />
        <path d="M16 16a7.500 7.500 0 1 1 15 1c0 6-5 11-12 13l-1-2c4-2 5-4 5-5-4 0-7-3-7-7z" />
      </svg>
      <svg width="44" height="30" viewBox="0 0 44 30">
        <rect width="44" height="30" fill="currentColor" />
        <path
          d="M5 7.500h7M15 7.500h4M22 7.500h5M30 7.500h9M5 15h4M12 15h5M20 15h4M27 15h4M34 15h5M5 22.500h7M15 22.500h14M32 22.500h7"
          stroke="#fff"
          strokeWidth="5"
        />
      </svg>
      <Gear size={38} color="#5b6467" ring={11.5} />
    </Ime>
  );
}

export default function App() {
  return (
    <Page>
      <GlobalStyle />
      <TabBar>
        <TopDecoration />
        <FileTab>文件</FileTab>
        {TABS.map((t) => <Tab key={t}>{t}</Tab>)}
        <ContextTabs>
          <ContextTab>分析</ContextTab>
          <ContextTab $active>设计</ContextTab>
        </ContextTabs>
        <TellMe>
          <svg width="24" height="34" viewBox="0 0 24 34" fill="none" stroke="#fff" strokeWidth="2">
            <path d="M8 23C8 18 2 17 2 10.500a10 9.500 0 0 1 20 0C22 17 16 18 16 23zM8 27.500h8M8 23v4M16 23v4M9 31.500h6" />
          </svg>
          操作说明搜索
        </TellMe>
        <Share>
          <svg width="28" height="32" viewBox="0 0 28 32" fill="none" stroke="#fff" strokeWidth="2">
            <circle cx="12" cy="8.500" r="7.500" />
            <path d="M1 29c0-7 4-13 11-13 2 0 4 1 5 2M20 15v16M12 23h16" />
          </svg>
          共享
        </Share>
      </TabBar>

      <Ribbon>
        <Group $pad="12px 19px 0 20px">
          <LayoutButtons>
            {LAYOUTS.map(([kind, first, second]) => (
              <LayoutButton key={kind}>
                <LayoutIcon kind={kind} />
                <LayoutLabel>
                  <LabelLine>{first}</LabelLine>
                  <LabelLine>{second}<Caret /></LabelLine>
                </LayoutLabel>
              </LayoutButton>
            ))}
          </LayoutButtons>
          <GroupTitle>布局</GroupTitle>
        </Group>
        <Group $pad="0">
          <OptionGrid>
            {OPTIONS.map(([name, checked]) => (
              <CheckLabel key={name}><Check defaultChecked={checked} />{name}</CheckLabel>
            ))}
          </OptionGrid>
          <GroupTitle>数据透视表样式选项</GroupTitle>
        </Group>
        <Group $pad="0 22px 0 21px">
          <Gallery>
            {STYLES.map((s, i) => (
              <StyleButton key={i} $selected={s.selected} aria-label={`样式 ${i + 1}`}><Swatch {...s} /></StyleButton>
            ))}
            <GalleryMore aria-label="其他"><Caret $size={7} /></GalleryMore>
          </Gallery>
          <GroupTitle>数据透视表样式</GroupTitle>
        </Group>
        <Collapse aria-label="折叠功能区"><Chevron up /></Collapse>
      </Ribbon>

      <FormulaBar>
        <NameBox>
          <input type="text" defaultValue="D24" aria-label="名称框" />
          <Caret $size={8} />
        </NameBox>
        <Dots $margin="0 28px" />
        <FormulaTools>
          <button aria-label="取消">
            <svg width="24" height="24" viewBox="0 0 24 24" stroke="#c3c3c3" strokeWidth="3">
              <path d="M2 2l20 20M22 2 2 22" />
            </svg>
          </button>
          <button aria-label="输入"><EnterMark /></button>
          <button aria-label="插入函数">
            <svg width="26" height="32" viewBox="0 0 26 32" fill="none" stroke="#5f5f5f" strokeWidth="2">
              <path d="M17 3c-3-3-6-1-7 4L6 25c-1 4-3 5-5 3M5 11h10M14 16c3-1 4 1 5 5s2 6 5 4M25 16c-4 0-6 9-11 9" />
            </svg>
          </button>
        </FormulaTools>
        <FormulaInput>
          <input type="text" defaultValue="1082869.5" aria-label="编辑栏" />
          <Chevron />
        </FormulaInput>
      </FormulaBar>

      <Workspace>
        <Book>
          <SheetRow>
            <SheetView>
              <Sheet />
              <Note $x={458} $y={27}>2. 只统计下单</Note>
              <Note $x={1113} $y={101}>3. 以表格形式显示数据</Note>
              <Note $x={1113} $y={178}>4. 重复显示数据</Note>
              <Note $x={1113} $y={254}>5. 不统计汇总</Note>
            </SheetView>
            <Scroll $margin="1px 4px 0 2px">
              <ScrollButton aria-label="向上"><UpArrow /></ScrollButton>
              <Thumb $length="34px" />
              <Space />
              <ScrollButton aria-label="向下"><DownArrow /></ScrollButton>
            </Scroll>
          </SheetRow>
          <SheetTabs>
            <NavButtons>
              <button aria-label="上一个"><SideArrow color={GREEN} /></button>
              <button aria-label="下一个"><SideArrow right color="#c3c3c3" /></button>
              <b>...</b>
            </NavButtons>
            <SheetTab>会销比表格</SheetTab>
            <SheetTab>会销比</SheetTab>
            <SheetTab>统计年月区域订单数量</SheetTab>
            <SheetTab $active>连带率率与客单价透视表</SheetTab>
            <AddSheet aria-label="新工作表">
              <svg width="33" height="33" viewBox="0 0 33 33" fill="none" stroke="#7b7b7b">
                <circle cx="16.500" cy="16.500" r="15" strokeWidth="2" />
                <path d="M16.500 8v17M8 16.500h17" strokeWidth="4" />
              </svg>
            </AddSheet>
            <Space />
            <Dots $margin="0 20px 0 0" />
            <Scroll $row $margin="3px 38px 0 0">
              <ScrollButton aria-label="向左"><SideArrow /></ScrollButton>
              <Thumb $row $length="681px" />
              <Space />
              <ScrollButton aria-label="向右"><SideArrow right /></ScrollButton>
            </Scroll>
          </SheetTabs>
        </Book>
        <FieldPane />
        <PaneNote>1. 构建统计消费数量和消费金额透视表</PaneNote>
      </Workspace>

      <Status>
        <StatusInner>
          <ViewButton $active aria-label="普通">
            <svg width="32" height="32" viewBox="0 0 32 32" fill="none" stroke="#666">
              <path d="M.5.5h31v31H.5zM10.500 0v32M21.500 0v32M0 10.500h32M0 21.500h32" />
            </svg>
          </ViewButton>
          <ViewButton aria-label="页面布局">
            <svg width="34" height="32" viewBox="0 0 34 32" fill="none" stroke="#666">
              <path d="M.5.5h33v31H.5zM8.500 4.500h17v23h-17zM12 8.500h10M12 12.500h10M12 16.500h10M12 20.500h10" />
            </svg>
          </ViewButton>
          <ViewButton aria-label="分页预览">
            <svg width="34" height="34" viewBox="0 0 34 34" fill="none" stroke="#666">
              <path d="M.5.5h33v33H.5zM10.500 0v22M20.500 0v22M0 22.500h34" />
            </svg>
          </ViewButton>
          <ZoomOut aria-label="缩小" />
          <ZoomSlider defaultValue={50} aria-label="缩放" />
          <button aria-label="放大">
            <svg width="16" height="16" viewBox="0 0 16 16" stroke="#666" strokeWidth="4">
              <path d="M8 0v16M0 8h16" />
            </svg>
          </button>
          <Zoom>100%</Zoom>
        </StatusInner>
      </Status>
      <ImeBar />
    </Page>
  );
}
